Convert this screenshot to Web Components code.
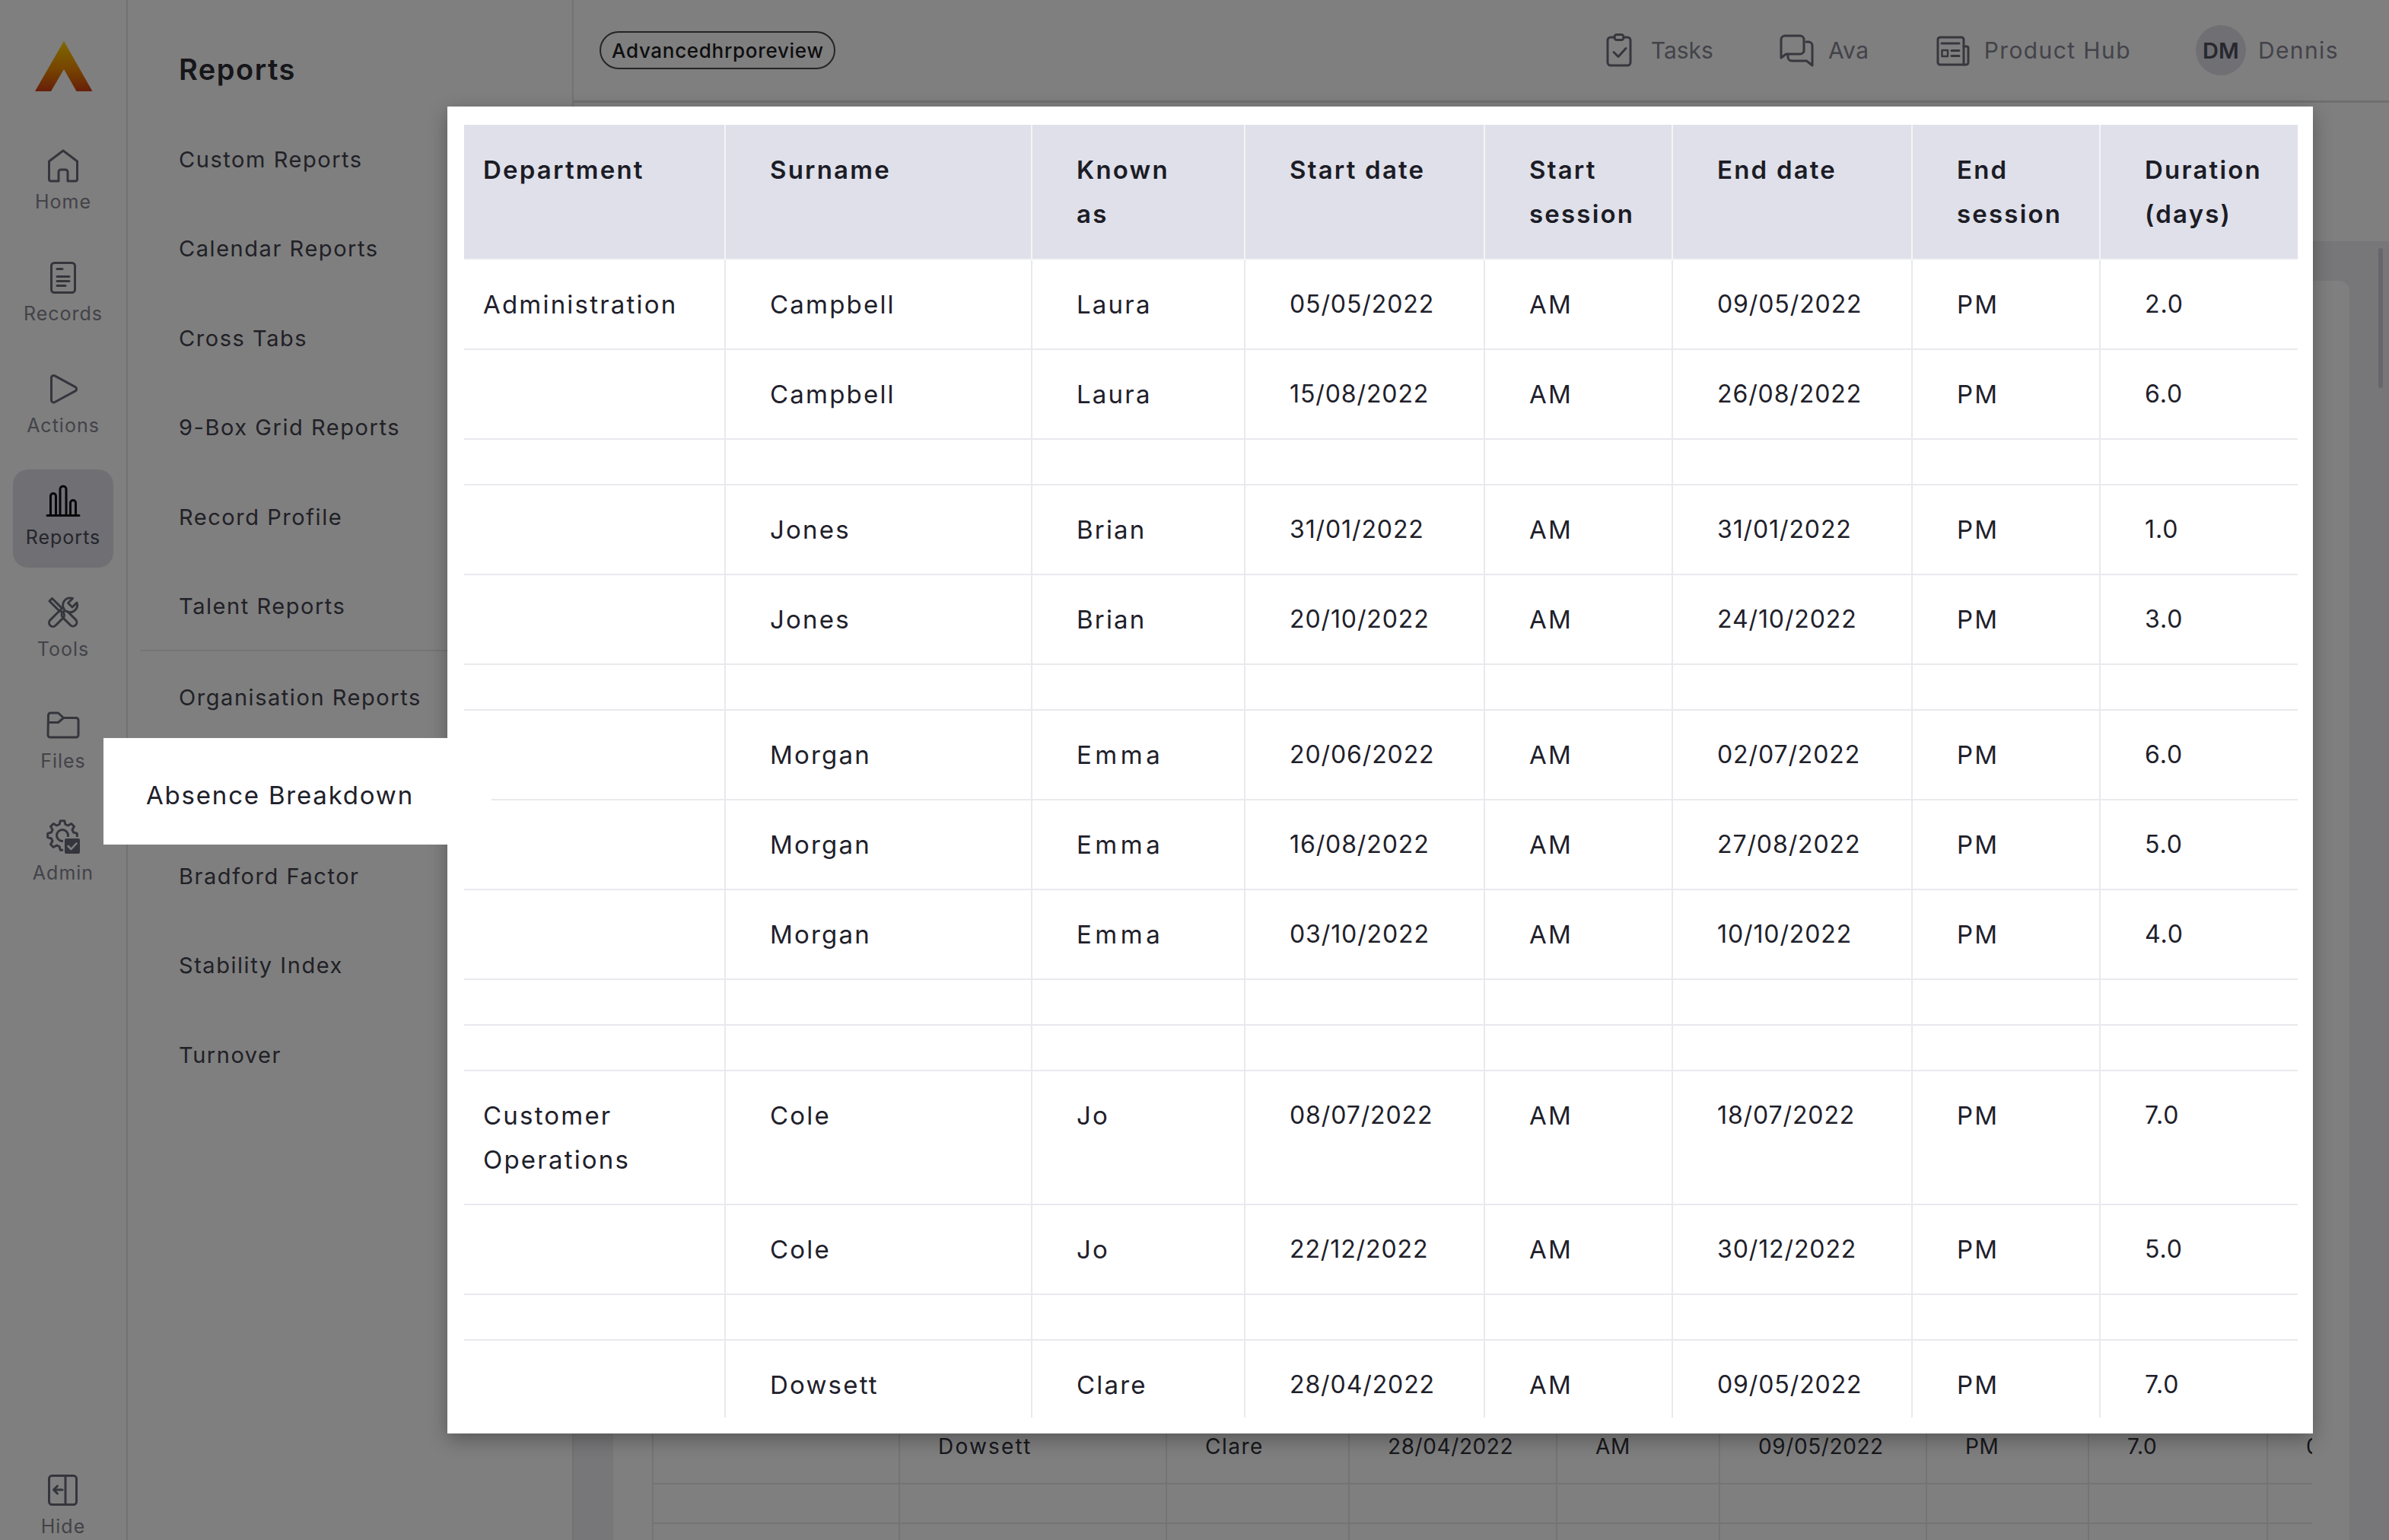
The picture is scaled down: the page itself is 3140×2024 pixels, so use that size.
<!DOCTYPE html>
<html>
  <head>
    <meta charset="utf-8" />
    <title>Reports</title>
    <style>
      html,
      body {
        margin: 0;
        width: 3140px;
        height: 2024px;
        overflow: hidden;
        background: #fff;
      }
    </style>
  </head>

  <body>
    <hr-app>
      <rail-nav slot="rail">
        <rail-item icon="home">Home</rail-item>
        <rail-item icon="records">Records</rail-item>
        <rail-item icon="actions">Actions</rail-item>
        <rail-item icon="reports" active>Reports</rail-item>
        <rail-item icon="tools">Tools</rail-item>
        <rail-item icon="files">Files</rail-item>
        <rail-item icon="admin">Admin</rail-item>
        <rail-item icon="hide" slot="bottom">Hide</rail-item>
      </rail-nav>

      <reports-nav slot="side">
        <nav-link>Custom Reports</nav-link>
        <nav-link>Calendar Reports</nav-link>
        <nav-link>Cross Tabs</nav-link>
        <nav-link>9-Box Grid Reports</nav-link>
        <nav-link>Record Profile</nav-link>
        <nav-link divided>Talent Reports</nav-link>
        <nav-link>Organisation Reports</nav-link>
        <!-- the open item: its label is in menu-popup, lifted over the dialog -->
        <nav-link></nav-link>
        <nav-link>Bradford Factor</nav-link>
        <nav-link>Stability Index</nav-link>
        <nav-link>Turnover</nav-link>
      </reports-nav>

      <top-bar slot="top" tenant="Advancedhrporeview">
        <top-action icon="tasks">Tasks</top-action>
        <top-action icon="ava">Ava</top-action>
        <top-action icon="hub">Product Hub</top-action>
        <top-action initials="DM">Dennis</top-action>
      </top-bar>

      <back-table slot="content"></back-table>

      <report-dialog slot="overlay"></report-dialog>
      <menu-popup slot="overlay">Absence Breakdown</menu-popup>
    </hr-app>

    <script>
      const FONT = `"Inter", "Open Sans", sans-serif`;

      function gearPath(cx, cy, outer, inner, teeth) {
        let d = "";
        const step = (Math.PI * 2) / teeth;
        for (let i = 0; i < teeth; i++) {
          const a = i * step - Math.PI / 2;
          const pts = [
            [inner, a - step * 0.34],
            [outer, a - step * 0.17],
            [outer, a + step * 0.17],
            [inner, a + step * 0.34],
          ];
          for (const [r, t] of pts) {
            const x = (cx + r * Math.cos(t)).toFixed(1);
            const y = (cy + r * Math.sin(t)).toFixed(1);
            d += (d ? "L" : "M") + x + " " + y;
          }
        }
        return d + "Z";
      }

      const ICONS = {
        home: `<path d="M18 45H8a2.5 2.5 0 0 1-2.5-2.5V19L24 5l18.500 14v23.500A2.500 2.500 0 0 1 40 45H30V33a3 3 0 0 0-3-3h-6a3 3 0 0 0-3 3z"/>`,
        records: `<rect x="8.500" y="5.500" width="31" height="39" rx="4"/><path d="M16 13.500h7M16 23.500h16M16 29.500h16M16 35.500h11"/>`,
        actions: `<path d="M8.500 9.500a3 3 0 0 1 4.500-2.600l27 14.700a3 3 0 0 1 0 5.300L13 41.500a3 3 0 0 1-4.500-2.600z"/>`,
        reports: `<path d="M3 43.500h42M7.500 43V18a3.500 3.500 0 0 1 7 0v25M20 43V9a4 4 0 0 1 8 0v34M33.500 43V27a3.500 3.500 0 0 1 7 0v16"/>`,
        tools: `<path d="M6 9l3.500-3.500 13 13-3.500 3.500z"/><rect x="-12" y="-5" width="24" height="10" rx="5" transform="translate(32 32) rotate(45)"/><rect x="-12" y="-5" width="24" height="10" rx="5" transform="translate(15.500 32.500) rotate(-45)"/><path d="M25.500 20a9.500 9.500 0 0 1 11-14.500l-6 6 5.500 5.500 6-6a9.500 9.500 0 0 1-13.500 11.500"/>`,
        files: `<path d="M4.500 12a3 3 0 0 1 3-3h10l7 6.500h16.500a3 3 0 0 1 3 3V38a3 3 0 0 1-3 3h-34a3 3 0 0 1-3-3z"/><path d="M4.500 21.500h13l7-6"/>`,
        admin: `<path d="${gearPath(23, 23, 19.5, 15, 8)}"/><circle cx="23" cy="23" r="7.500"/><rect x="25" y="26" width="22" height="22" rx="3" fill="#6a6a7a" stroke="#fff" stroke-width="2"/><path d="M30.500 37l4 4 7-7.500" stroke="#fff" stroke-width="2.500"/>`,
        hide: `<rect x="5.500" y="5.500" width="36" height="38" rx="4"/><path d="M27 5.500v38M23 24H12M16.500 19l-5 5 5 5"/>`,
        tasks: `<path d="M18 7h-5a4 4 0 0 0-4 4v29a4 4 0 0 0 4 4h22a4 4 0 0 0 4-4V11a4 4 0 0 0-4-4h-5"/><rect x="18" y="3.500" width="12" height="7" rx="3"/><path d="M17 26.500l6 6 10-11"/>`,
        ava: `<path d="M34 26V10a5 5 0 0 0-5-5H9a5 5 0 0 0-5 5v24l6.500-5H29a5 5 0 0 0 5-5"/><path d="M37 13h3a5 5 0 0 1 5 5v26l-7.500-6H18a5 5 0 0 1-5-5v-3.500"/>`,
        hub: `<path d="M5 10a3 3 0 0 1 3-3h28a3 3 0 0 1 3 3v33H8a3 3 0 0 1-3-3z"/><path d="M39 19h4a2 2 0 0 1 2 2v19a3 3 0 0 1-3 3h-3"/><path d="M10 15h23M23 24.500h10M23 31.500h10"/><rect x="10.500" y="24" width="7.500" height="8" stroke-width="2.500"/>`,
      };

      function icon(name, size = 48) {
        return `<svg viewBox="0 0 48 48" width="${size}" height="${size}" fill="none" stroke="currentColor" stroke-width="3" stroke-linecap="round" stroke-linejoin="round">${ICONS[name]}</svg>`;
      }

      class ShadowBase extends HTMLElement {
        connectedCallback() {
          if (this.shadowRoot) return;
          this.attachShadow({ mode: "open" }).innerHTML = this.render();
        }
      }

      class HrApp extends ShadowBase {
        render() {
          return `<style>
            :host { display: flex; position: relative; width: 3140px; height: 2024px; overflow: hidden; background: #fff; font-family: ${FONT}; color: #4a4a56; }
            .main { flex: 1; min-width: 0; display: flex; flex-direction: column; }
            .sub { height: 182px; flex: none; }
            .content { flex: 1; min-height: 0; position: relative; background: #eeeef3; padding: 52px 52px 0; display: flex; }
            .thumb { position: absolute; left: 2372px; top: 9px; width: 6px; height: 184px; border-radius: 3px; background: #cfcfd6; }
            .scrim { position: absolute; inset: 0; background: rgba(0, 0, 0, 0.5); }
          </style>
          <slot name="rail"></slot>
          <slot name="side"></slot>
          <div class="main">
            <slot name="top"></slot>
            <div class="sub"></div>
            <div class="content"><slot name="content"></slot><div class="thumb"></div></div>
          </div>
          <div class="scrim"></div>
          <slot name="overlay"></slot>`;
        }
      }

      class RailNav extends ShadowBase {
        render() {
          return `<style>
            :host { display: flex; flex-direction: column; flex: none; box-sizing: border-box; width: 168px; height: 2024px; border-right: 2px solid #e4e4e8; }
            .logo { height: 176px; flex: none; display: block; }
            .items { display: flex; flex-direction: column; gap: 18.500px; padding: 0 17px; }
            .bottom { margin-top: auto; padding: 0 17px; }
          </style>
          <svg class="logo" width="166" height="176" viewBox="0 0 166 176">
            <defs>
              <linearGradient id="g" x1="0" y1="0" x2="0" y2="1">
                <stop offset="0" stop-color="#ffd200" />
                <stop offset="0.55" stop-color="#ee8a00" />
                <stop offset="1" stop-color="#cf3d14" />
              </linearGradient>
            </defs>
            <path d="M84 54L121.500 120H100.500L84 91L67 120H46z" fill="url(#g)" />
          </svg>
          <div class="items"><slot></slot></div>
          <div class="bottom"><slot name="bottom"></slot></div>`;
        }
      }

      class RailItem extends ShadowBase {
        render() {
          const active = this.hasAttribute("active");
          return `<style>
            :host { display: flex; flex-direction: column; align-items: center; box-sizing: border-box; height: 128.500px; width: 132px; padding-top: 17px; border-radius: 20px; font-size: 25px; line-height: 36px; letter-spacing: 1px; color: ${active ? "#4a4a56" : "#868692"}; ${active ? "background: #dfdfe8;" : ""} }
            :host([slot="bottom"]) { height: 90px; padding-top: 0; }
            svg { display: block; color: ${active ? "#101014" : "#6a6a7a"}; margin-bottom: 6px; }
            span { color: inherit; white-space: nowrap; }
          </style>
          ${icon(this.getAttribute("icon"))}<span><slot></slot></span>`;
        }
      }

      class ReportsNav extends ShadowBase {
        render() {
          return `<style>
            :host { display: flex; flex-direction: column; flex: none; box-sizing: border-box; width: 586px; height: 2024px; border-right: 2px solid #e4e4e8; padding-left: 16px; }
            h1 { margin: 0; padding: 64px 0 0 51px; height: 149px; box-sizing: border-box; font-size: 38px; line-height: 54px; font-weight: 600; color: #2c2c34; letter-spacing: 1.5px; }
          </style>
          <h1>Reports</h1>
          <slot></slot>`;
        }
      }

      class NavLink extends ShadowBase {
        render() {
          return `<style>
            :host { display: block; height: 117.400px; box-sizing: border-box; padding: 41px 0 0 51px; font-size: 29px; line-height: 40px; letter-spacing: 1.55px; color: #42424e; white-space: nowrap; }
            :host([divided]) { height: 120px; border-bottom: 2px solid #eaeaee; }
          </style>
          <slot></slot>`;
        }
      }

      class TopBar extends ShadowBase {
        render() {
          return `<style>
            :host { display: flex; align-items: center; flex: none; box-sizing: border-box; height: 135px; padding: 0 66px 0 34px; border-bottom: 3px solid #dedede; }
            .pill { display: flex; align-items: center; box-sizing: border-box; height: 50px; padding: 0 13px 0 14px; border: 2px solid #4a4a50; border-radius: 25px; font-size: 26px; font-weight: 500; letter-spacing: 0.7px; color: #1c1c22; }
            .actions { display: flex; align-items: center; gap: 85px; margin-left: auto; }
          </style>
          <div class="pill">${this.getAttribute("tenant")}</div>
          <div class="actions"><slot></slot></div>`;
        }
      }

      class TopAction extends ShadowBase {
        render() {
          const initials = this.getAttribute("initials");
          return `<style>
            :host { display: flex; align-items: center; gap: 18px; font-size: 30px; letter-spacing: 1.4px; color: #868694; white-space: nowrap; }
            :host([icon="tasks"]) { letter-spacing: 0; }
            :host([icon="ava"]) { letter-spacing: 0.5px; }
            :host([initials]) { gap: 16px; }
            svg { display: block; color: #6e6e7c; }
            .avatar { display: flex; align-items: center; justify-content: center; width: 66px; height: 66px; border-radius: 50%; background: #dfdfe8; color: #50505c; font-size: 29px; font-weight: 600; letter-spacing: 0; }
          </style>
          ${initials ? `<div class="avatar">${initials}</div>` : icon(this.getAttribute("icon"))}
          <span><slot></slot></span>`;
        }
      }

      class BackTable extends ShadowBase {
        render() {
          const widths = [324, 351, 240, 273, 214, 272, 213, 235, 60];
          const values = ["", "Dowsett", "Clare", "28/04/2022", "AM", "09/05/2022", "PM", "7.0", "0.0"];
          const cells = (row) =>
            values.map((v) => `<div class="c ${row}">${row === "r0" ? v : ""}</div>`).join("");
          return `<style>
            :host { display: block; flex: 1; min-width: 0; background: #fff; border-radius: 14px 14px 0 0; padding: 0 49px 0 51px; }
            .grid { display: grid; grid-template-columns: ${widths.map((w) => w + "px").join(" ")}; grid-template-rows: 1582px 52px 52px; height: 100%; overflow: hidden; }
            .c { box-sizing: border-box; border-left: 2px solid #e8e8ec; border-bottom: 2px solid #e8e8ec; padding: 0 0 28px 50px; display: flex; align-items: flex-end; font-size: 28px; line-height: 40px; letter-spacing: 0.6px; color: #30303a; white-space: nowrap; }
            .c:nth-child(2) { letter-spacing: 2.2px; }
            .c:nth-child(3) { letter-spacing: 1.5px; }
          </style>
          <div class="grid">${cells("r0")}${cells("r1")}${cells("r2")}</div>`;
        }
      }

      const WIDTHS = [343, 403, 280, 315, 247, 315, 247, 260];
      const HEAD = ["Department", "Surname", "Known<br>as", "Start date", "Start session", "End date", "End session", "Duration (days)"];
      const ROWS = [
        ["Administration", "Campbell", "Laura", "05/05/2022", "AM", "09/05/2022", "PM", "2.0"],
        ["", "Campbell", "Laura", "15/08/2022", "AM", "26/08/2022", "PM", "6.0"],
        [],
        ["", "Jones", "Brian", "31/01/2022", "AM", "31/01/2022", "PM", "1.0"],
        ["", "Jones", "Brian", "20/10/2022", "AM", "24/10/2022", "PM", "3.0"],
        [],
        ["", "Morgan", "Emma", "20/06/2022", "AM", "02/07/2022", "PM", "6.0"],
        ["", "Morgan", "Emma", "16/08/2022", "AM", "27/08/2022", "PM", "5.0"],
        ["", "Morgan", "Emma", "03/10/2022", "AM", "10/10/2022", "PM", "4.0"],
        [],
        [],
        ["Customer Operations", "Cole", "Jo", "08/07/2022", "AM", "18/07/2022", "PM", "7.0"],
        ["", "Cole", "Jo", "22/12/2022", "AM", "30/12/2022", "PM", "5.0"],
        [],
        ["", "Dowsett", "Clare", "28/04/2022", "AM", "09/05/2022", "PM", "7.0"],
      ];

      class ReportDialog extends ShadowBase {
        render() {
          const blanks = WIDTHS.map(() => "<td></td>").join("");
          const body = ROWS.map((r) =>
            r.length
              ? `<tr>${r.map((v) => `<td class="${/\d/.test(v) ? "num" : v === "Emma" ? "word wide" : "word"}">${v}</td>`).join("")}</tr>`
              : `<tr class="blank">${blanks}</tr>`
          ).join("");
          return `<style>
            :host { display: block; position: absolute; left: 588px; top: 140px; width: 2452px; height: 1744px; box-sizing: border-box; padding: 24px 20px 21px 22px; background: #fff; box-shadow: 0 8px 24px rgba(0, 0, 0, 0.3); }
            .scroll { height: 100%; overflow: hidden; }
            table { table-layout: fixed; width: 2410px; border-collapse: collapse; font-size: 32px; line-height: 58px; letter-spacing: 0.9px; color: #20202a; }
            th, td { box-sizing: border-box; padding: 29px 20px 29px 58px; text-align: left; vertical-align: top; border-right: 2px solid #e9e9ee; border-bottom: 2px solid #e9e9ee; }
            th:first-child, td:first-child { padding-left: 25px; }
            th:last-child, td:last-child { border-right: 0; }
            th { padding-top: 30px; padding-bottom: 30px; background: #dfe0e9; font-size: 33px; font-weight: 600; letter-spacing: 2.2px; color: #1c1c26; border-right-color: #f4f4f8; border-bottom-color: #f4f4f8; }
            td.word { font-size: 33px; letter-spacing: 2.2px; }
            td.wide { letter-spacing: 4.5px; }
            tr.blank td { padding: 0; height: 60px; }
          </style>
          <div class="scroll">
            <table>
              <colgroup>${WIDTHS.map((w) => `<col style="width:${w}px">`).join("")}</colgroup>
              <thead><tr>${HEAD.map((h) => `<th>${h}</th>`).join("")}</tr></thead>
              <tbody>${body}</tbody>
            </table>
          </div>`;
        }
      }

      class MenuPopup extends ShadowBase {
        render() {
          return `<style>
            :host { display: flex; align-items: center; position: absolute; left: 136px; top: 970px; width: 510px; height: 140px; box-sizing: border-box; padding: 10px 0 0 56px; background: #fff; font-size: 33px; letter-spacing: 1.8px; color: #20202a; white-space: nowrap; }
          </style>
          <slot></slot>`;
        }
      }

      customElements.define("hr-app", HrApp);
      customElements.define("rail-nav", RailNav);
      customElements.define("rail-item", RailItem);
      customElements.define("reports-nav", ReportsNav);
      customElements.define("nav-link", NavLink);
      customElements.define("top-bar", TopBar);
      customElements.define("top-action", TopAction);
      customElements.define("back-table", BackTable);
      customElements.define("report-dialog", ReportDialog);
      customElements.define("menu-popup", MenuPopup);
    </script>
  </body>
</html>
